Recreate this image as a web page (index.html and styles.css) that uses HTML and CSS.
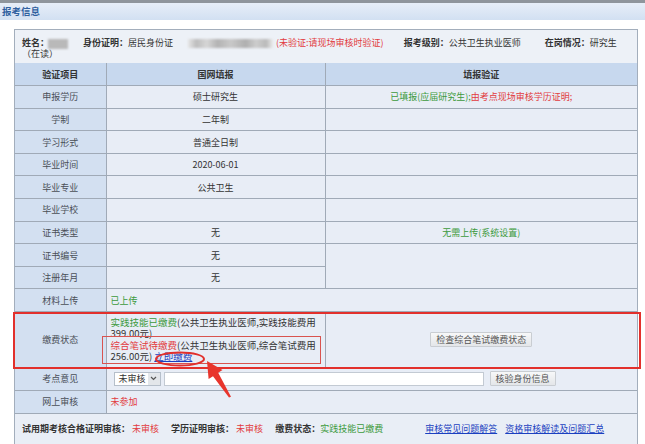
FILE: index.html
```html
<!DOCTYPE html>
<html lang="zh-CN">
  <head>
    <meta charset="UTF-8" />
    <title>报考信息</title>
    <link rel="stylesheet" href="styles.css">
  </head>
  <body>
    <div class="page">
      <div class="topline"></div>
      <div class="titlebar">报考信息</div>

      <div class="panel">
        <div class="info">
          <div class="info-name">
            <b>姓名：</b><span class="blur blur-name"></span>
            <div class="sub">（在读）</div>
          </div>
          <div class="info-item">
            <b>身份证明：</b>居民身份证<span class="blur blur-id"></span><span class="red">(未验证:请现场审核时验证)</span>
          </div>
          <div class="info-item level"><b>报考级别：</b>公共卫生执业医师</div>
          <div class="info-item post"><b>在岗情况：</b>研究生</div>
        </div>

        <table class="check">
          <colgroup>
            <col class="c1">
            <col class="c2">
            <col class="c3">
          </colgroup>
          <tr class="head">
            <td>验证项目</td>
            <td>国网填报</td>
            <td>填报验证</td>
          </tr>
          <tr>
            <td class="label">申报学历</td>
            <td>硕士研究生</td>
            <td><span class="green">已填报(应届研究生);</span><span class="red">由考点现场审核学历证明;</span></td>
          </tr>
          <tr>
            <td class="label">学制</td>
            <td>二年制</td>
            <td></td>
          </tr>
          <tr>
            <td class="label">学习形式</td>
            <td>普通全日制</td>
            <td></td>
          </tr>
          <tr>
            <td class="label">毕业时间</td>
            <td>2020-06-01</td>
            <td></td>
          </tr>
          <tr>
            <td class="label">毕业专业</td>
            <td>公共卫生</td>
            <td></td>
          </tr>
          <tr>
            <td class="label">毕业学校</td>
            <td></td>
            <td></td>
          </tr>
          <tr>
            <td class="label">证书类型</td>
            <td>无</td>
            <td class="green">无需上传(系统设置)</td>
          </tr>
          <tr>
            <td class="label">证书编号</td>
            <td>无</td>
            <td rowspan="2"></td>
          </tr>
          <tr>
            <td class="label">注册年月</td>
            <td>无</td>
          </tr>
          <tr>
            <td class="label">材料上传</td>
            <td class="left green" colspan="2">已上传</td>
          </tr>
          <tr class="fee-row">
            <td class="label">缴费状态</td>
            <td class="left fee">
              <span class="green">实践技能已缴费</span>(公共卫生执业医师,实践技能费用<br>399.00元)<br>
              <span class="red">综合笔试待缴费</span>(公共卫生执业医师,综合笔试费用<br>256.00元) <a href="#">立即缴费</a>
            </td>
            <td><button class="btn">检查综合笔试缴费状态</button></td>
          </tr>
          <tr>
            <td class="label">考点意见</td>
            <td class="left" colspan="2">
              <div class="opinion">
                <span class="select">未审核<span class="arrow"><svg width="7" height="5" viewBox="0 0 7 5"><path d="M1 1l2.5 2.5L6 1" fill="none" stroke="#555" stroke-width="1.2"/></svg></span></span>
                <span class="field"></span>
                <button class="btn">核验身份信息</button>
              </div>
            </td>
          </tr>
          <tr>
            <td class="label">网上审核</td>
            <td class="left red" colspan="2">未参加</td>
          </tr>
        </table>

        <div class="summary">
          <b>试用期考核合格证明审核：</b><span class="red val">未审核</span>
          <b>学历证明审核：</b><span class="red val">未审核</span>
          <b>缴费状态：</b><span class="green">实践技能已缴费</span>
          <a href="#" class="faq">审核常见问题解答</a>
          <a href="#">资格审核解读及问题汇总</a>
        </div>
      </div>

      <!-- red marks drawn over the screenshot -->
      <svg class="marks" width="645" height="444" viewBox="0 0 645 444">
        <rect x="14" y="313" width="626" height="55" fill="none" stroke="#e2302c" stroke-width="2"/>
        <rect x="102.5" y="336.5" width="218" height="27" fill="none" stroke="#d9534f" stroke-width="1"/>
        <ellipse cx="180" cy="359" rx="24" ry="6.5" fill="none" stroke="#e2302c" stroke-width="2"/>
        <polygon points="207,361 222.5,370 218.2,372.8 231,396.8 229,397.6 213,376.2 208.6,379" fill="#e8352c"/>
      </svg>
    </div>
  </body>
</html>
```

FILE: styles.css
```css
* {
  margin: 0;
  padding: 0;
  box-sizing: border-box;
}

body {
  font-family: "Noto Sans CJK SC", "Liberation Sans", sans-serif;
  font-size: 9px;
  color: #333;
  background: #fff;
}

.page {
  position: relative;
  width: 645px;
  height: 444px;
  overflow: hidden;
}

.topline {
  height: 3px;
  background: #8f959c;
}

.titlebar {
  height: 17px;
  line-height: 17px;
  padding-left: 2px;
  background: linear-gradient(#e7eef8, #d2e0f2);
  color: #2f609f;
  font-weight: bold;
  font-size: 9.5px;
}

.panel {
  margin: 9px 7px 0 14px;
  border: 1px solid #a3aebc;
  background: #e9eef6;
  height: 430px;
}

.red {
  color: #e23b40;
}

.green {
  color: #3c9a3c;
}

a {
  color: #1b3fc0;
}

/* info row */
.info {
  display: flex;
  align-items: flex-start;
  height: 33px;
  padding: 7px 0 0 7px;
  line-height: 12px;
  background: #edf1f7;
}

.info-name {
  width: 61px;
}

.info-name .sub {
  line-height: 9px;
}

.blur {
  display: inline-block;
  vertical-align: middle;
  background: #b9b9b9;
  filter: blur(1px);
}

.blur-name {
  width: 20px;
  height: 10px;
  margin-left: -1px;
}

.blur-id {
  width: 85px;
  height: 9px;
  margin: 0 3px 0 15px;
  background: linear-gradient(90deg, #e6e6e6 0, #bdbdbd 10%, #d6d6d6 22%, #b3b3b3 35%, #c9c9c9 50%, #afafaf 68%, #cdcdcd 80%, #bababa 92%, #ececec 100%);
}

.level {
  margin-left: 20px;
}

.post {
  margin-left: 24px;
}

/* table */
.check {
  width: 100%;
  border-collapse: collapse;
  border-style: hidden;
  text-align: center;
}

.check .c1 {
  width: 91px;
}

.check .c2 {
  width: 219px;
}

.check td {
  height: 22.6px;
  padding: 0 4px;
  border: 1px solid #a0aab7;
  background: #e8edf6;
}

.check td.label {
  background: #d3e0f1;
  color: #4a4f57;
}

.check .head td {
  background: #c7d8ee;
  font-weight: bold;
}

.check td.left {
  text-align: left;
}

.fee-row td {
  height: 56px;
}

.fee {
  font-size: 9.5px;
  line-height: 11.3px;
}

.btn {
  height: 15px;
  padding: 0 5px;
  font-family: inherit;
  font-size: 9px;
  color: #555;
  background: linear-gradient(#f7f8f9, #e4e6e9);
  border: 1px solid #c9cdd2;
  border-radius: 1px;
}

.opinion {
  display: flex;
  align-items: center;
  padding-left: 3px;
}

.select {
  display: flex;
  align-items: center;
  justify-content: space-between;
  width: 47px;
  height: 14px;
  padding-left: 4px;
  background: #fff;
  border: 1px solid #b6bfca;
}

.arrow {
  display: flex;
  align-items: center;
  justify-content: center;
  width: 12px;
  height: 12px;
  background: #e3e6ea;
}

.field {
  width: 320px;
  height: 14px;
  margin: 0 6px 0 3px;
  background: #fff;
  border: 1px solid #c3cad3;
}

/* bottom line */
.summary {
  height: 30px;
  line-height: 30px;
  padding-left: 7px;
  border-top: 1px solid #a0aab7;
}

.summary .val {
  margin: 0 10px 0 2px;
}

.summary .faq {
  margin: 0 6px 0 40px;
}

.marks {
  position: absolute;
  top: 0;
  left: 0;
  pointer-events: none;
}
```
